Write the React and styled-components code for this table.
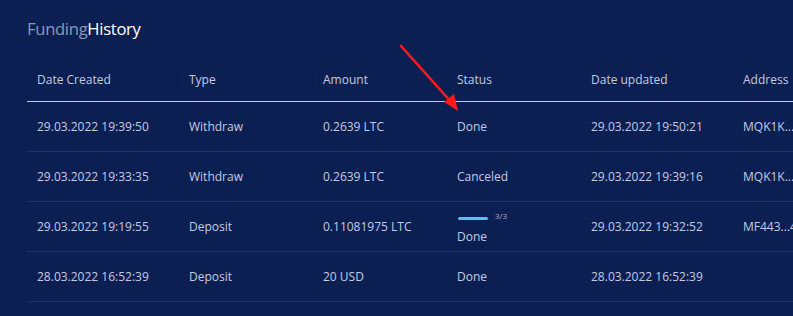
import React from 'react'
import styled, { createGlobalStyle } from 'styled-components'

const Global = createGlobalStyle`
  html, body {
    margin: 0;
    padding: 0;
    background: #0c1f52;
    overflow: hidden;
  }
  body {
    font-family: "Open Sans", "Noto Sans", sans-serif;
  }
`

const Page = styled.div`
  position: relative;
  width: 793px;
  height: 316px;
  background: #0c1f52;
  padding: 17px 0 0 27px;
  box-sizing: border-box;
  overflow: hidden;
`

const Title = styled.h2`
  margin: 0;
  font-size: 16.6px;
  font-weight: 400;
  line-height: 24px;
  letter-spacing: -0.3px;
  color: #8e98b6;
  span {
    color: #ffffff;
  }
`

const Table = styled.div`
  margin-top: 17px;
  width: 900px;
`

const cols = '152px 134px 134px 134px 152px 1fr'

const HeadRow = styled.div`
  display: grid;
  grid-template-columns: ${cols};
  height: 43px;
  align-items: center;
  border-bottom: 1px solid #c3cbe2;
`

const HeadCell = styled.div`
  padding-left: 10px;
  font-size: 12px;
  color: #c4cbe0;
  height: 26px;
  line-height: 26px;
  border-left: ${p => (p.$first ? 'none' : '1px solid #0a1c4b')};
  margin-left: ${p => (p.$first ? '0' : '-1px')};
`

const Row = styled.div`
  display: grid;
  grid-template-columns: ${cols};
  height: 49px;
  align-items: center;
  border-bottom: 1px solid #1f346a;
`

const Cell = styled.div`
  padding-left: 10px;
  padding-top: ${p => (p.$shift ? '8px' : '0')};
  font-size: 12px;
  color: #c4cbe0;
  white-space: nowrap;
  overflow: ${p => (p.$shift ? 'visible' : 'hidden')};
`

const Progress = styled.div`
  display: flex;
  align-items: center;
  gap: 7px;
  margin: 0 0 8px 1px;
`

const Bar = styled.div`
  width: 30px;
  height: 3px;
  border-radius: 2px;
  background: #57c2f2;
`

const Steps = styled.span`
  font-size: 8px;
  line-height: 8px;
  color: #aab3cf;
  margin-top: -5px;
`

const Arrow = styled.svg`
  position: absolute;
  left: 396px;
  top: 42px;
  pointer-events: none;
`

const rows = [
  ['29.03.2022 19:39:50', 'Withdraw', '0.2639 LTC', 'Done', null, '29.03.2022 19:50:21', 'MQK1K...'],
  ['29.03.2022 19:33:35', 'Withdraw', '0.2639 LTC', 'Canceled', null, '29.03.2022 19:39:16', 'MQK1K...'],
  ['29.03.2022 19:19:55', 'Deposit', '0.11081975 LTC', 'Done', '3/3', '29.03.2022 19:32:52', 'MF443...4'],
  ['28.03.2022 16:52:39', 'Deposit', '20 USD', 'Done', null, '28.03.2022 16:52:39', ''],
]

const heads = ['Date Created', 'Type', 'Amount', 'Status', 'Date updated', 'Address']

const App = () => {
  return (
    <Page>
      <Global />
      <Title>Funding<span>History</span></Title>
      <Table>
        <HeadRow>
          {heads.map((h, i) => (
            <HeadCell key={h} $first={i === 0}>{h}</HeadCell>
          ))}
        </HeadRow>
        {rows.map((r, i) => (
          <Row key={i}>
            <Cell>{r[0]}</Cell>
            <Cell>{r[1]}</Cell>
            <Cell>{r[2]}</Cell>
            <Cell $shift={!!r[4]}>
              {r[4] && (
                <Progress>
                  <Bar />
                  <Steps>{r[4]}</Steps>
                </Progress>
              )}
              {r[3]}
            </Cell>
            <Cell>{r[5]}</Cell>
            <Cell>{r[6]}</Cell>
          </Row>
        ))}
      </Table>
      <Arrow width="70" height="75" viewBox="0 0 70 75">
        <line x1="5" y1="4" x2="56" y2="61" stroke="#ff1a1a" strokeWidth="2.6" strokeLinecap="round" />
        <polygon points="62,69 48,60 58,52" fill="#ff1a1a" />
      </Arrow>
    </Page>
  )
}

export default App
